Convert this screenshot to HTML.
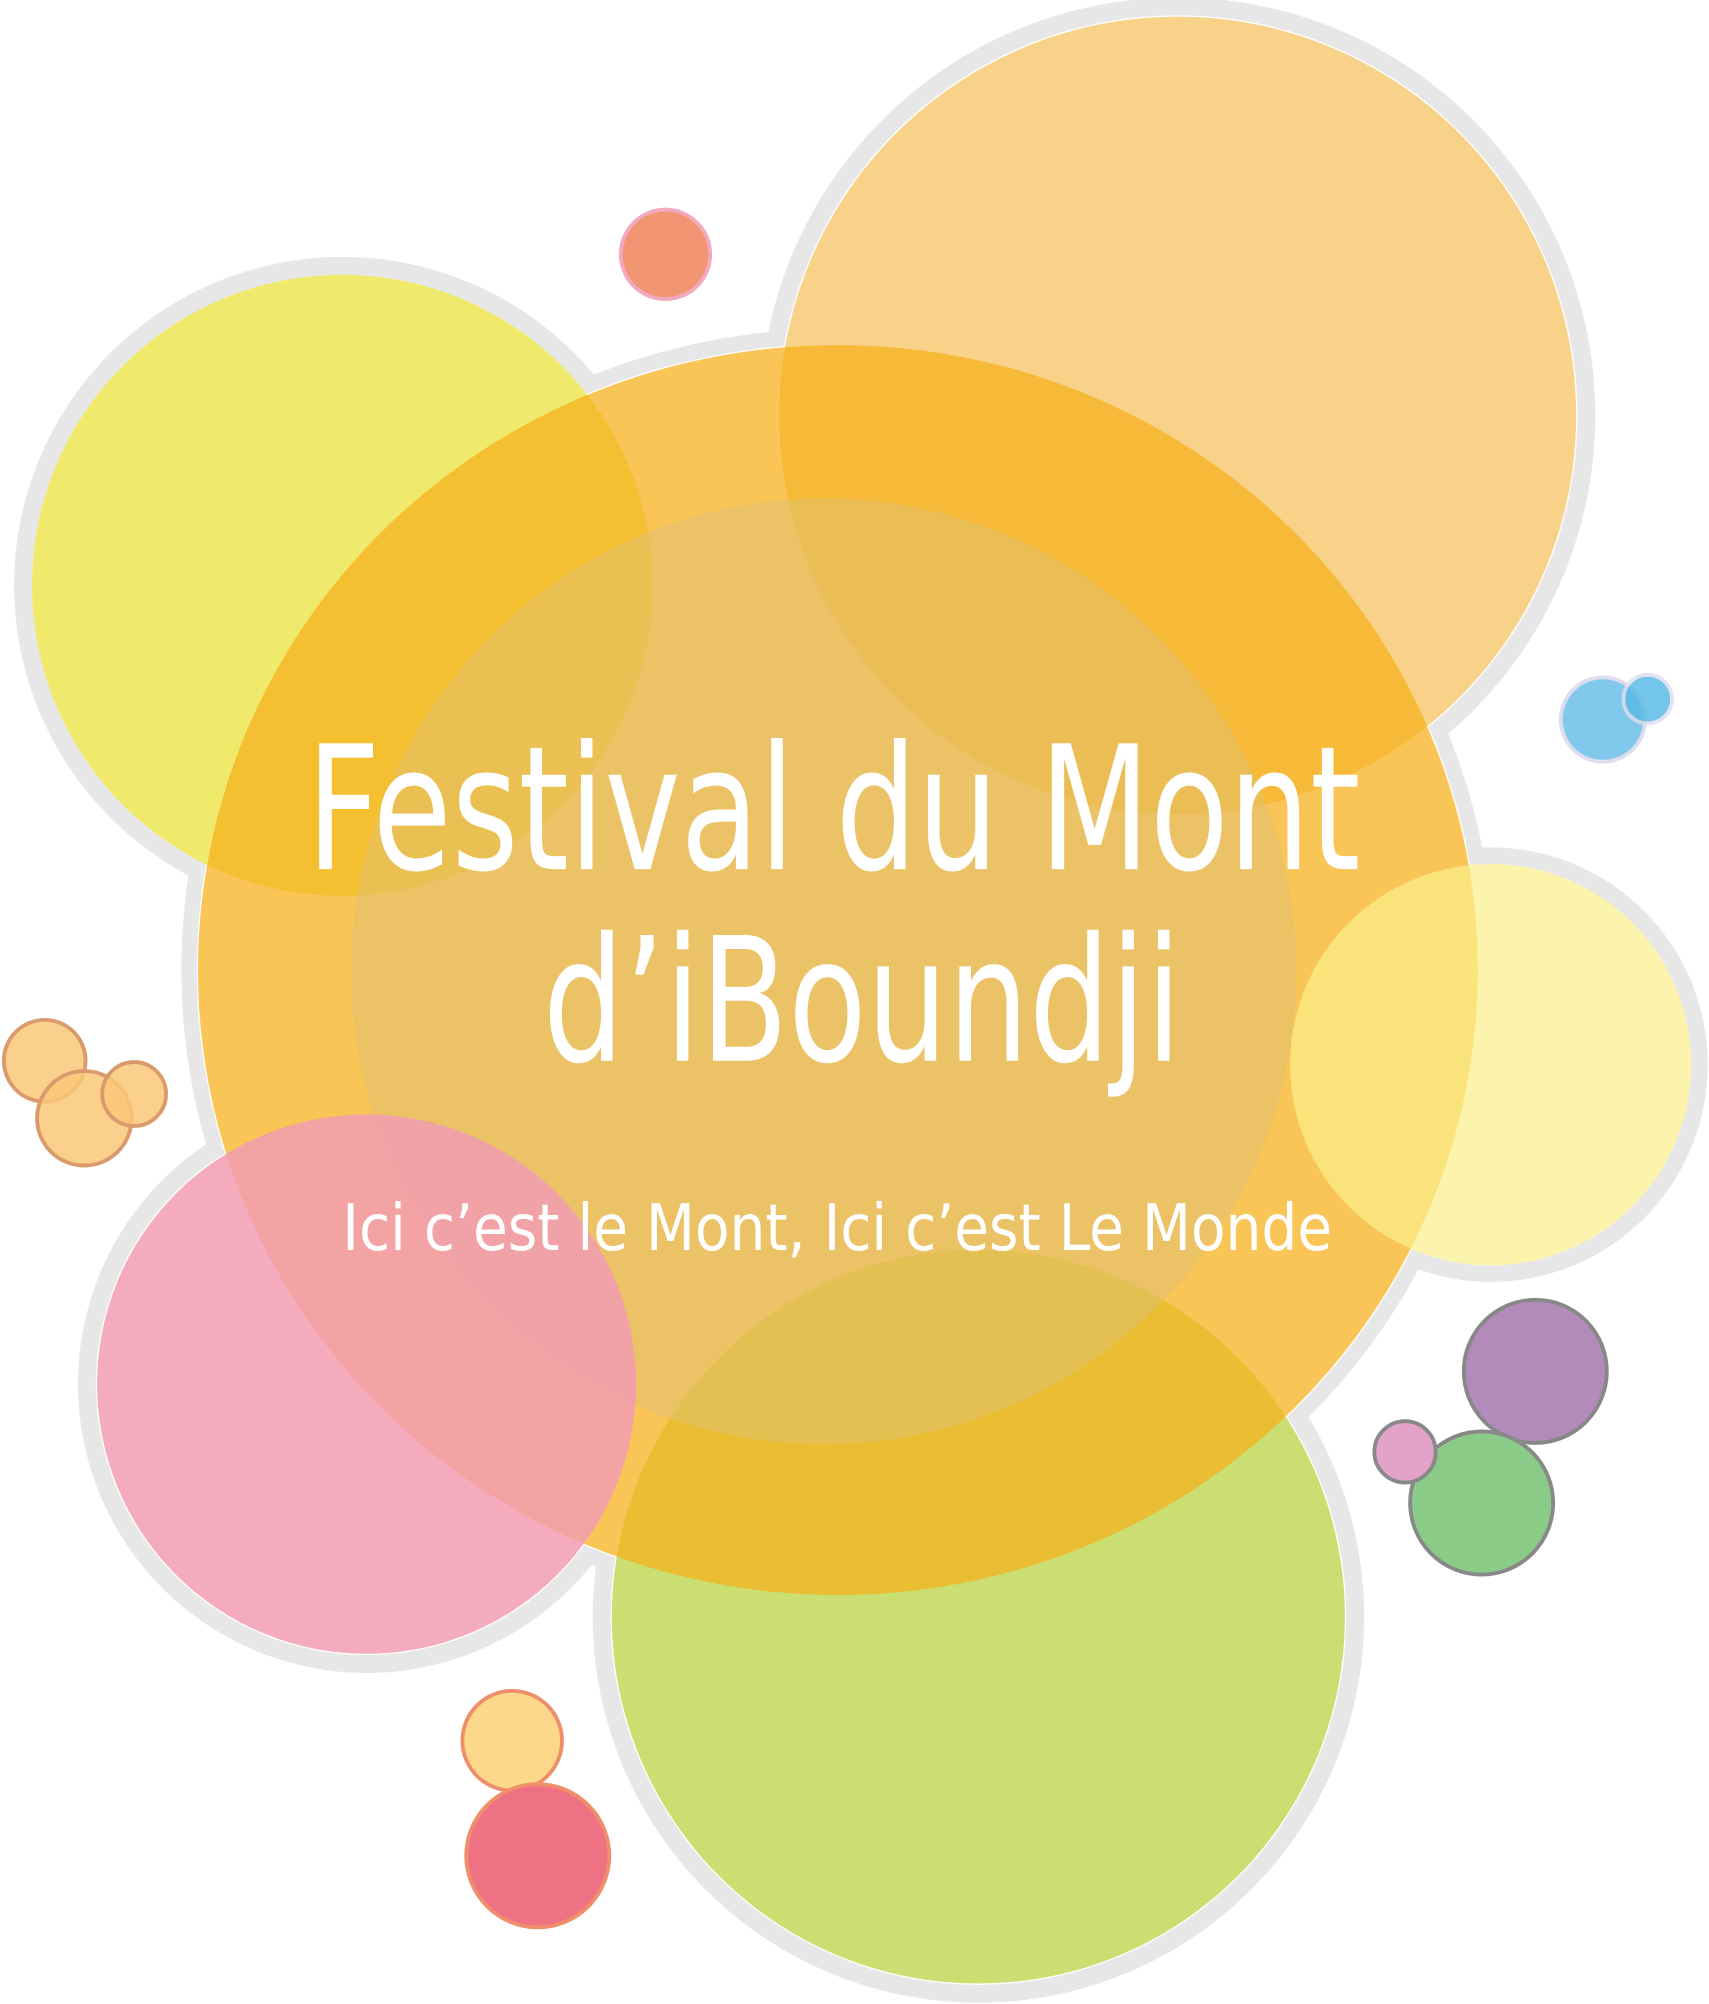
<!DOCTYPE html>
<html><head><meta charset="utf-8"><style>
html,body{margin:0;padding:0;background:#fff;width:1709px;height:2004px;overflow:hidden}
svg{display:block}
text{font-family:"Liberation Sans Narrow","DejaVu Sans Condensed","Liberation Sans",sans-serif;fill:#fff}
</style></head><body>
<svg width="1709" height="2004" viewBox="0 0 1338 1568" preserveAspectRatio="none">
<g fill="#e7e7e7">
<circle cx="268" cy="458" r="257"/>
<circle cx="922" cy="325" r="327"/>
<ellipse cx="656" cy="759" rx="514" ry="502"/>
<circle cx="1167" cy="833" r="170"/>
<circle cx="287" cy="1083" r="226"/>
<circle cx="766" cy="1265" r="302"/>
</g>
<g fill="#fff">
<circle cx="268" cy="458" r="243"/>
<circle cx="922" cy="325" r="313"/>
<ellipse cx="656" cy="759" rx="502" ry="490"/>
<circle cx="1167" cy="833" r="157"/>
<circle cx="287" cy="1083" r="212"/>
<circle cx="766" cy="1265" r="288"/>
</g>
<circle cx="268" cy="458" r="243" fill="#f0ea6c"/>
<circle cx="922" cy="325" r="312" fill="#f9d289"/>
<circle cx="766" cy="1265" r="287" fill="#cbde72"/>
<ellipse cx="656" cy="759" rx="501" ry="489" fill="#f5b21d" opacity="0.75"/>
<circle cx="645" cy="760" r="370" fill="#dcc07a" opacity="0.45"/>
<circle cx="287" cy="1083" r="211" fill="#f29cb2" opacity="0.85"/>
<circle cx="1167" cy="833" r="157" fill="#fbef8a" opacity="0.7"/>
<circle cx="521" cy="199" r="35" fill="#f19572" stroke="#f2a9bd" stroke-width="3"/>
<circle cx="1255" cy="563" r="33" fill="#80c8ec" stroke="#dde" stroke-width="3"/>
<circle cx="1290" cy="547" r="19" fill="#5bbbe6" opacity="0.85" stroke="#dde" stroke-width="3"/>
<g fill="#f9c878" fill-opacity="0.85" stroke="#d99a6c" stroke-width="3">
<circle cx="35" cy="830" r="32"/>
<circle cx="66" cy="875" r="37"/>
<circle cx="105" cy="856" r="25"/>
</g>
<circle cx="1202" cy="1073" r="56" fill="#b28bba" stroke="#888" stroke-width="3"/>
<circle cx="1160" cy="1176" r="56" fill="#8acb87" stroke="#888" stroke-width="3"/>
<circle cx="1100" cy="1136" r="24" fill="#e3a2c8" stroke="#888" stroke-width="3"/>
<circle cx="401" cy="1362" r="39" fill="#fcd98a" stroke="#ef8f6a" stroke-width="3"/>
<circle cx="421" cy="1452" r="56" fill="#ee7284" stroke="#ef8f6a" stroke-width="3"/>
<text x="240" y="680" font-size="135" textLength="825" lengthAdjust="spacingAndGlyphs">Festival du Mont</text>
<text x="425" y="830" font-size="135" textLength="500" lengthAdjust="spacingAndGlyphs">d’iBoundji</text>
<text x="268" y="978" font-size="50" textLength="775" lengthAdjust="spacingAndGlyphs">Ici c’est le Mont, Ici c’est Le Monde</text>
</svg>
</body></html>
